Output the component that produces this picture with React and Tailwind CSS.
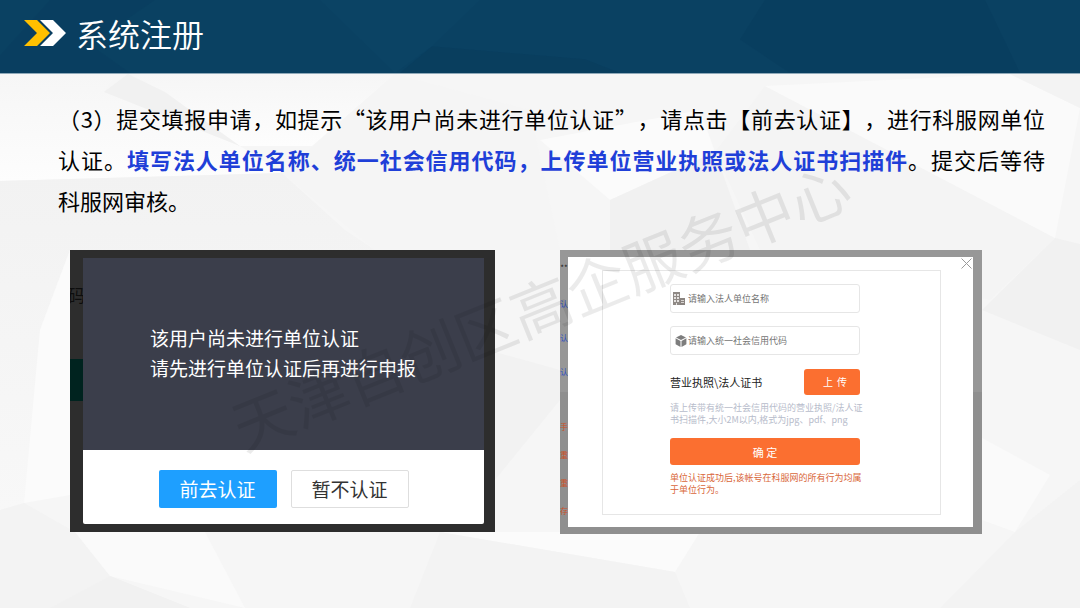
import React, { useState } from 'react';

const blueLabels = ['认', '认', '认'];
const redLabels = ['手', '重', '重', '存'];

const Logo = () => (
  <svg viewBox="0 0 42 26" className="w-[42px] h-[26px] shrink-0" aria-hidden="true">
    <path d="M0 0h13l13 13-13 13H0l13-13z" fill="#ffc000" />
    <path d="M16 0h13l13 13-13 13H16l13-13z" fill="#fff" />
  </svg>
);

// Polygon pattern behind the whole slide
const SlideBackground = () => (
  <svg
    viewBox="0 0 1080 608"
    preserveAspectRatio="none"
    className="absolute inset-0 w-full h-full"
    aria-hidden="true"
  >
    <defs>
      <linearGradient id="fade" x1="0" y1="0" x2="0" y2="1">
        <stop offset="0" stopColor="#f6f6f6" />
        <stop offset="1" stopColor="#fdfdfd" />
      </linearGradient>
      <linearGradient id="shade" x1="0" y1="0" x2="0" y2="1">
        <stop offset="0" stopColor="#f2f2f2" />
        <stop offset="1" stopColor="#f8f8f8" />
      </linearGradient>
    </defs>
    <rect width="1080" height="608" fill="#f6f6f6" />
    <path d="M0 74H116L104 92 240 146 282 173 0 181z" fill="url(#fade)" />
    <path d="M128 74H165L240 146 104 92z" fill="#f1f1f1" />
    <path d="M128 74H395L312 146 240 146 165 92z" fill="url(#fade)" />
    <path d="M0 181L282 173 345 230 375 250 70 250 40 330 24 503 0 510z" fill="url(#shade)" />
    <path d="M395 74L530 110 560 250H375L282 173z" fill="#f5f5f5" />
    <path d="M540 140L610 200 715 152 700 110z" fill="#fbfbfb" />
    <path d="M610 200L715 152 750 250H610z" fill="#f1f1f1" />
    <path d="M765 86L1055 238 990 300 760 250 715 152z" fill="#f4f4f4" />
    <path d="M765 86L1010 74 1080 108 1055 238z" fill="#fafafa" />
    <path d="M1010 74H1080V108z" fill="#f3f3f3" />
    <path d="M1055 238L1080 244V350L982 310z" fill="#f1f1f1" />
    <path d="M495 352L560 370V400L495 480z" fill="#f2f2f2" />
    <path d="M982 438L1050 475 1015 532 982 520z" fill="#fafafa" />
    <path d="M40 330L70 250V495L24 503z" fill="#fbfbfb" />
    <path d="M0 510L24 503 75 532 110 576 50 608H0z" fill="#f3f3f3" />
    <path d="M110 576L75 532H205L245 608z" fill="#fafafa" />
    <path d="M110 576L190 608H50z" fill="#f1f1f1" />
    <path d="M440 532L700 532 675 572z" fill="#fbfbfb" />
    <path d="M440 532L675 572 690 608H410z" fill="#f3f3f3" />
    <path d="M1015 532L1080 480V608H940z" fill="#f3f3f3" />
  </svg>
);

const HeaderFacets = () => (
  <svg
    viewBox="0 0 1080 74"
    preserveAspectRatio="none"
    className="absolute inset-0 w-full h-full"
    aria-hidden="true"
  >
    <path d="M0 56L50 0H155L90 45 130 74H0z" fill="#08395a" opacity="0.25" />
    <path d="M432 47L585 60 620 74H400z" fill="#08395a" opacity="0.4" />
    <path d="M320 0H480L432 47 395 74z" fill="#0f4a6c" opacity="0.2" />
    <path d="M765 0H985L1020 74H790L740 40z" fill="#08395a" opacity="0.3" />
  </svg>
);

const BuildingIcon = () => (
  <svg viewBox="0 0 12 14" className="w-3 h-[14px] shrink-0" aria-hidden="true">
    <path d="M0 0h7v13H0z" fill="#8f8985" />
    <path d="M7 6h5v7H7z" fill="#8a8480" />
    <path d="M1 2h2v2H1zM4 2h2v2H4zM1 5h2v2H1zM4 5h2v2H4zM1 8h2v2H1zM4 8h2v2H4zM3 11h1v2H3z" fill="#e4e1df" />
    <path d="M8 8h3v1H8zM8 10h3v1H8z" fill="#d8d4d1" />
  </svg>
);

const CubeIcon = () => (
  <svg viewBox="0 0 12 12" className="w-3 h-3 shrink-0" aria-hidden="true">
    <path d="M6 0l5 2.4L6 5 1 2.4zM.6 3.3L5.5 5.9V12L.6 9.2zM11.4 3.3L6.5 5.9V12l4.9-2.8z" fill="#7d7d7d" />
  </svg>
);

const ConfirmDialog = () => (
  <section className="flex h-[282px] overflow-hidden bg-[#2d2d2d] pt-2 pb-2 pr-[11px]">
    <div className="w-[13px] shrink-0 overflow-hidden">
      <div className="mt-6 flex justify-center text-[17px] leading-[26px] text-[#0d0d0d]">
        <span className="shrink-0">码</span>
      </div>
      <div className="mt-[51px] h-[42px] bg-[#00231f]" />
    </div>
    <div className="flex min-w-0 flex-1 flex-col">
      <div className="flex h-48 flex-col justify-center bg-[#3b3e4b] pb-[2px] pl-[67px] text-[19px] leading-[30px] text-white">
        <p>该用户尚未进行单位认证</p>
        <p>请先进行单位认证后再进行申报</p>
      </div>
      <div className="flex flex-1 items-center justify-center gap-[14px] rounded-b-xs bg-white pt-1">
        <button type="button" className="h-[38px] w-[118px] rounded-xs bg-[#1e9fff] text-[19px] text-white">
          前去认证
        </button>
        <button type="button" className="h-[38px] w-[118px] rounded-xs border border-[#dedede] bg-white text-[19px] text-[#333]">
          暂不认证
        </button>
      </div>
    </div>
  </section>
);

const CertForm = () => {
  const [unitName, setUnitName] = useState('');
  const [creditCode, setCreditCode] = useState('');

  const handleSubmit = (event) => {
    event.preventDefault();
  };

  return (
    <section className="flex h-[284px] overflow-hidden bg-linear-to-b from-[#979797] from-50% to-[#8f8f8f] to-50% pr-[9px]">
      <div className="w-2 shrink-0 overflow-hidden pt-[10px] text-[8px]">
        <div className="flex h-4 items-center justify-center text-[#222]">**</div>
        <div className="mt-[11px]">
          {blueLabels.map((label, i) => (
            <div key={i} className="flex h-[34px] items-center justify-center text-[#2f4fc0]">
              {label}
            </div>
          ))}
        </div>
        <div className="mt-6">
          {redLabels.map((label, i) => (
            <div key={i} className="flex h-7 items-center justify-center text-[#c9512a]">
              {label}
            </div>
          ))}
        </div>
      </div>
      <div className="relative my-[7px] min-w-0 flex-1 bg-white pt-[13px] pr-8 pb-3 pl-[34px]">
        <button type="button" aria-label="关闭" className="absolute top-px right-px">
          <svg viewBox="0 0 11 11" className="h-[11px] w-[11px]" aria-hidden="true">
            <path d="M.5.5l10 10M10.5.5l-10 10" stroke="#9a9a9a" strokeWidth="1" fill="none" />
          </svg>
        </button>
        <form
          onSubmit={handleSubmit}
          className="h-full border border-[#e6e6e6] pt-[13px] pr-20 pl-[67px] text-[9px] leading-3"
        >
          <label htmlFor="unitName" className="flex h-[29px] items-center gap-[3px] rounded-[3px] border border-[#e6e6e6] pl-[2px]">
            <BuildingIcon />
            <input
              id="unitName"
              type="text"
              value={unitName}
              onChange={(e) => setUnitName(e.target.value)}
              placeholder="请输入法人单位名称"
              className="min-w-0 flex-1 outline-none placeholder:text-[#757575]"
            />
          </label>
          <label htmlFor="creditCode" className="mt-[13px] flex h-[29px] items-center gap-px rounded-[3px] border border-[#e6e6e6] pl-1">
            <CubeIcon />
            <input
              id="creditCode"
              type="text"
              value={creditCode}
              onChange={(e) => setCreditCode(e.target.value)}
              placeholder="请输入统一社会信用代码"
              className="min-w-0 flex-1 outline-none placeholder:text-[#757575]"
            />
          </label>
          <div className="mt-[14px] flex items-center justify-between">
            <span className="whitespace-nowrap text-[11px] text-[#222]">营业执照\法人证书</span>
            <button type="button" className="flex h-[26px] w-14 items-center justify-center gap-1 rounded-[3px] bg-[#fb6f30] pl-[6px] text-[10px] text-white">
              <span>上</span>
              <span>传</span>
            </button>
          </div>
          <p className="mt-[7px] whitespace-nowrap text-[#b7bccb]">
            请上传带有统一社会信用代码的营业执照/法人证<br />
            书扫描件,大小2M以内,格式为jpg、pdf、png
          </p>
          <button type="submit" className="mt-3 h-[27px] w-full rounded-[3px] bg-[#fb6f30] text-[11px] text-white">
            确 定
          </button>
          <p className="mt-[7px] whitespace-nowrap text-[#d9673a]">
            单位认证成功后,该帐号在科服网的所有行为均属<br />
            于单位行为。
          </p>
        </form>
      </div>
    </section>
  );
};

const App = () => {
  return (
    <div className="relative min-h-screen overflow-hidden bg-[#f6f6f6] font-['Noto_Sans_CJK_SC',sans-serif] [text-spacing-trim:space-all]">
      <SlideBackground />
      <header className="relative h-[74px] border-b border-[#8fa9b9] bg-[#0a4162]">
        <HeaderFacets />
        <div className="relative flex items-center gap-[10px] pt-[9px] pl-6">
          <Logo />
          <h1 className="text-[32px] leading-[48px] font-[350] text-white">系统注册</h1>
        </div>
      </header>
      <main className="relative pt-6">
        <p className="pr-[35px] pl-[58px] text-[22px] leading-[41px] whitespace-nowrap text-black">
          <span className="block [text-align-last:justify]">
            （3）提交填报申请，如提示“该用户尚未进行单位认证”，请点击【前去认证】，进行科服网单位
          </span>
          <span className="block [text-align-last:justify]">
            认证。
            <b className="font-bold text-[#1f3fd8]">填写法人单位名称、统一社会信用代码，上传单位营业执照或法人证书扫描件</b>
            。提交后等待
          </span>
          <span className="block">科服网审核。</span>
        </p>
        <div className="mt-[29px] grid grid-cols-[425fr_422fr] items-start gap-[65px] pr-[98px] pl-[70px]">
          <ConfirmDialog />
          <CertForm />
        </div>
      </main>
      <div className="pointer-events-none absolute inset-0 flex items-center justify-center">
        <span className="-rotate-22 text-[60px] leading-none font-normal whitespace-nowrap text-black/8">
          天津自创区高企服务中心
        </span>
      </div>
    </div>
  );
};

export default App;
